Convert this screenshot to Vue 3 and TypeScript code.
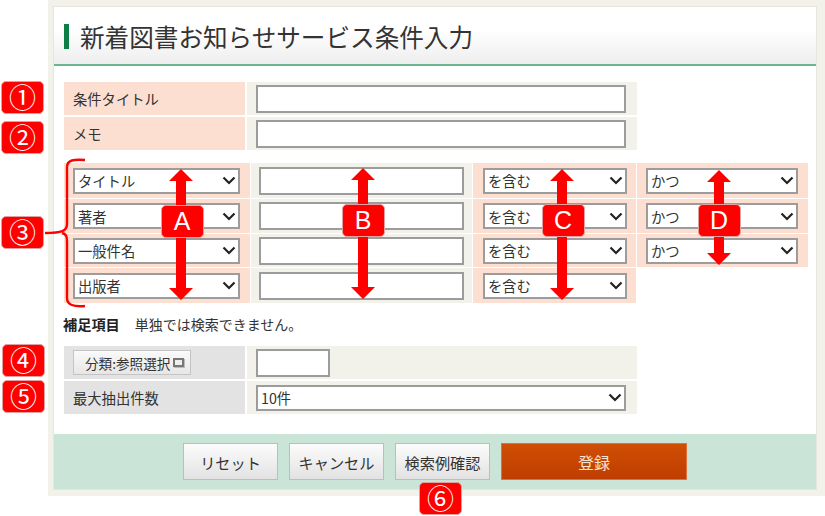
<script setup lang="ts">
const rows = [
  { field: 'タイトル', cond: 'かつ' },
  { field: '著者', cond: 'かつ' },
  { field: '一般件名', cond: 'かつ' },
  { field: '出版者', cond: '' },
]
const badges = [
  { t: '①', c: 'b1' }, { t: '②', c: 'b2' }, { t: '③', c: 'b3' },
  { t: '④', c: 'b4' }, { t: '⑤', c: 'b5' }, { t: '⑥', c: 'b6' },
  { t: 'A', c: 'ba' }, { t: 'B', c: 'bb' }, { t: 'C', c: 'bc' }, { t: 'D', c: 'bd' },
]
const arrow = (x: number, y1: number, y2: number) =>
  `M${x - 5} ${y1 + 12}H${x - 12}L${x} ${y1}L${x + 12} ${y1 + 12}H${x + 5}V${y2 - 12}H${x + 12}L${x} ${y2}L${x - 12} ${y2 - 12}H${x - 5}Z`
const arrows = [arrow(181, 169, 300), arrow(363, 168, 299), arrow(562, 169, 300), arrow(719, 170, 265)]
</script>

<template>
  <div class="page">
    <div class="frame">
      <div class="panel">
        <header class="head"><h1>新着図書お知らせサービス条件入力</h1></header>
        <div class="body">
          <div class="form-a">
            <div class="lab">条件タイトル</div>
            <div class="val"><input class="w-a" type="text" /></div>
            <div class="lab">メモ</div>
            <div class="val"><input class="w-a" type="text" /></div>
          </div>
          <div class="form-b">
            <template v-for="r in rows" :key="r.field">
              <div class="cell pink c1"><select class="sel-a"><option>{{ r.field }}</option></select></div>
              <div class="cell beige c2"><input class="in-b" type="text" /></div>
              <div class="cell pink c3"><select class="sel-c"><option>を含む</option></select></div>
              <div v-if="r.cond" class="cell pink c4"><select class="sel-d"><option>{{ r.cond }}</option></select></div>
              <div v-else></div>
            </template>
          </div>
          <p class="note"><strong>補足項目</strong><span>単独では検索できません。</span></p>
          <div class="form-a form-c">
            <div class="lab gray">
              <button class="ref" type="button">分類:参照選択<i class="win"></i></button>
            </div>
            <div class="val"><input class="w-s" type="text" /></div>
            <div class="lab gray">最大抽出件数</div>
            <div class="val"><select class="w-a sel-m"><option>10件</option></select></div>
          </div>
        </div>
        <footer class="foot">
          <button class="btn" type="button">リセット</button>
          <button class="btn" type="button">キャンセル</button>
          <button class="btn" type="button">検索例確認</button>
          <button class="btn main" type="button">登録</button>
        </footer>
      </div>
    </div>

    <svg class="marks" viewBox="0 0 825 516" width="825" height="516" aria-hidden="true">
      <path v-for="(d, i) in arrows" :key="i" :d="d" fill="#f00" />
      <path d="M85 160C74 159 67 160 67 167V224C67 231 62 233 45 233M62 233C67 234 67 238 67 242V298C67 305 74 307 85 306" fill="none" stroke="#f00" stroke-width="2.4" />
    </svg>
    <div v-for="b in badges" :key="b.t" class="badge" :class="b.c">{{ b.t }}</div>
  </div>
</template>

<style>
html, body { margin: 0; background: #fff; }
</style>

<style scoped>
* { box-sizing: border-box; }
.page {
  position: relative;
  width: 825px;
  height: 516px;
  overflow: hidden;
  padding-left: 48px;
  font-family: "Noto Sans CJK JP", "Liberation Sans", sans-serif;
  color: #333;
}
.frame {
  width: 777px;
  height: 496px;
  background: #f3f2ea;
  padding: 6px 8px 6px 5px;
}
.panel {
  height: 100%;
  background: #fff;
  border: 1px solid #e6e6da;
  display: flex;
  flex-direction: column;
}
.head {
  height: 59px;
  flex: none;
  padding: 2px 0 0 10px;
  display: flex;
  align-items: center;
  background: linear-gradient(#fff, #fff 40%, #eeeeee);
  border-bottom: 2px solid #6db58f;
}
.head h1 {
  margin: 0;
  font-size: 24.6px;
  font-weight: 400;
  line-height: 25px;
  height: 25px;
  padding-left: 11px;
  border-left: 5px solid #0b7f46;
  white-space: nowrap;
}
.body {
  flex: 1;
  padding: 16px 0 0 10px;
}
.form-a {
  display: grid;
  grid-template-columns: 181px 390px;
  column-gap: 2px;
  row-gap: 2px;
  grid-auto-rows: 33px;
}
.lab {
  background: #fcdfd1;
  display: flex;
  align-items: center;
  padding-left: 9px;
  font-size: 14.3px;
}
.lab.gray { background: #e3e3e3; }
.val {
  background: #f3f2ea;
  display: flex;
  align-items: center;
  padding-left: 9px;
}
input, select {
  border: 2px solid #9c9c9c;
  border-radius: 0;
  background-color: #fff;
  font-family: inherit;
  color: #333;
  margin: 0;
  outline: none;
}
select {
  appearance: none;
  font-size: 14.3px;
  padding: 0 0 0 3px;
  height: 26px;
  background-image: url("data:image/svg+xml,%3Csvg xmlns='http://www.w3.org/2000/svg' width='14' height='9' viewBox='0 0 14 9'%3E%3Cpath d='M1.5 1.5L7 7l5.5-5.5' fill='none' stroke='%23222' stroke-width='2.2'/%3E%3C/svg%3E");
  background-repeat: no-repeat;
  background-position: right 2px center;
}
.w-a { width: 370px; height: 28px; }
.sel-m { height: 26px; }
.w-s { width: 74px; height: 28px; }
.form-b {
  margin-top: 13px;
  display: grid;
  grid-template-columns: 186px 221px 163px 171px;
  grid-template-rows: 35px 34px 33px 35px;
  gap: 1px;
}
.cell { display: flex; align-items: center; }
.pink { background: #fcdfd1; }
.beige { background: #f3f2ea; }
.c1 { padding-left: 9px; }
.c2 { padding-left: 8px; }
.c3 { padding-left: 10px; }
.c4 { padding-left: 9px; }
.sel-a { width: 167px; }
.in-b { width: 205px; height: 28px; }
.sel-c { width: 144px; }
.sel-d { width: 152px; }
.note {
  margin: 12px 0 0 -1px;
  font-size: 14px;
  line-height: 18px;
  height: 18px;
  display: flex;
  gap: 15px;
}
.note strong { font-weight: 700; color: #222; font-size: 14.2px; }
.form-c { margin-top: 13px; }
.ref {
  display: flex;
  align-items: center;
  width: 118px;
  height: 25px;
  padding: 0 0 0 11px;
  border: 1px solid #c4c4c4;
  background: linear-gradient(#fafafa, #e6e6e6);
  font-family: inherit;
  font-size: 13.6px;
  color: #333;
  white-space: nowrap;
}
.win {
  display: block;
  width: 11px;
  height: 9px;
  margin-left: 3px;
  border: 2px solid #777;
  border-top-width: 2px;
  background: #eee;
  box-shadow: 1px 1px 0 #bbb;
}
.foot {
  height: 55px;
  flex: none;
  background: #cbe4d8;
  display: flex;
  align-items: flex-start;
  gap: 11px;
  padding: 9px 0 0 129px;
  margin-bottom: 0;
}
.btn {
  width: 95px;
  height: 37px;
  border: 1px solid #bdbdbd;
  background: linear-gradient(#fcfcfc, #e2e2e2);
  font-family: inherit;
  font-size: 15.2px;
  color: #333;
  padding: 0;
}
.btn.main {
  width: 186px;
  border: 1px solid #e0713a;
  background: linear-gradient(#d04f04, #bf3d00);
  color: #fbe3d4;
  font-size: 16px;
}
.marks { position: absolute; left: 0; top: 0; pointer-events: none; }
.badge {
  position: absolute;
  width: 43px;
  height: 33px;
  background: #f00;
  border: 1px solid #e4a0a0;
  border-radius: 5px;
  color: #fff;
  display: flex;
  align-items: center;
  justify-content: center;
  padding-top: 3px;
  font-size: 27px;
  line-height: 1;
  font-family: "Liberation Sans", "Noto Sans CJK JP", sans-serif;
}
.ba, .bb, .bc, .bd { font-size: 25px; padding: 0 1px 0 0; }
.b1 { left: 1px; top: 81px; }
.b2 { left: 1px; top: 121px; }
.b3 { left: 1px; top: 216px; }
.b4 { left: 2px; top: 344px; }
.b5 { left: 2px; top: 380px; }
.b6 { left: 419px; top: 482px; }
.ba { left: 161px; top: 205px; }
.bb { left: 342px; top: 204px; }
.bc { left: 542px; top: 204px; }
.bd { left: 698px; top: 204px; }
</style>
